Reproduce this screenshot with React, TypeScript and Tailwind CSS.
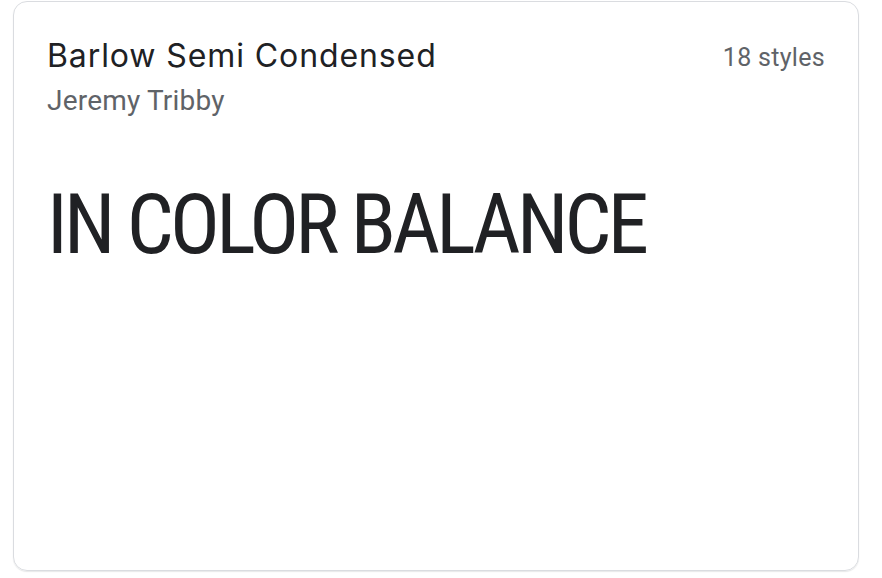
export default function App() {
  return (
    <div className="w-[882px] h-[578px] bg-white pt-[1px] pl-[13px]">
      <div className="flex h-[570px] w-[846px] flex-col rounded-[14px] border border-[#dadce0] px-[33px] pt-[34px] shadow-[0_1px_1px_rgba(60,64,67,0.12)]">
        <div className="flex items-start justify-between">
          <div className="font-['Inter',sans-serif] text-[32px] leading-[40px] tracking-[0.9px] text-[#202124]">
            Barlow Semi Condensed
          </div>
          <div className="mt-[6px] font-['Roboto',sans-serif] text-[25px] leading-[32px] tracking-[0.3px] text-[#5f6368]">
            18 styles
          </div>
        </div>
        <div className="mt-[7px] font-['Roboto',sans-serif] text-[28px] leading-[36px] tracking-[0.2px] text-[#5f6368]">
          Jeremy Tribby
        </div>
        <div className="mt-[64px] font-['Roboto_Condensed','Roboto',sans-serif] text-[83px] font-normal leading-[84px] tracking-[-3.8px] text-[#202124]">
          IN COLOR BALANCE
        </div>
      </div>
    </div>
  );
}
